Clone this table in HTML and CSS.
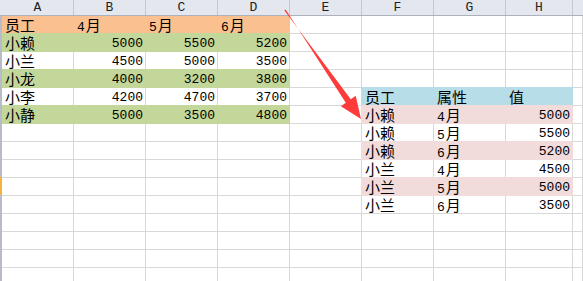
FILE: index.html
```html
<!DOCTYPE html>
<html lang="zh">
<head>
<meta charset="utf-8">
<title>Sheet</title>
<link rel="stylesheet" href="styles.css">
</head>
<body>
<div class="app">
  <div class="colhead">
    <div class="ch">A</div><div class="ch">B</div><div class="ch">C</div><div class="ch">D</div>
    <div class="ch">E</div><div class="ch">F</div><div class="ch">G</div><div class="ch h">H</div><div class="ch last"></div>
  </div>
  <div class="body">
    <div class="strip"></div>
    <div class="grid">
      <!-- row 1 -->
      <div class="c o">员工</div><div class="c o"><span class="d">4</span>月</div><div class="c o"><span class="d">5</span>月</div><div class="c o"><span class="d">6</span>月</div><div class="c"></div><div class="c"></div><div class="c"></div><div class="c"></div><div class="c"></div>
      <!-- row 2 -->
      <div class="c g">小赖</div><div class="c g n">5000</div><div class="c g n">5500</div><div class="c g n">5200</div><div class="c"></div><div class="c"></div><div class="c"></div><div class="c"></div><div class="c"></div>
      <!-- row 3 -->
      <div class="c">小兰</div><div class="c n">4500</div><div class="c n">5000</div><div class="c n">3500</div><div class="c"></div><div class="c"></div><div class="c"></div><div class="c"></div><div class="c"></div>
      <!-- row 4 -->
      <div class="c g">小龙</div><div class="c g n">4000</div><div class="c g n">3200</div><div class="c g n">3800</div><div class="c"></div><div class="c"></div><div class="c"></div><div class="c"></div><div class="c"></div>
      <!-- row 5 -->
      <div class="c">小李</div><div class="c n">4200</div><div class="c n">4700</div><div class="c n">3700</div><div class="c"></div><div class="c b">员工</div><div class="c b">属性</div><div class="c b">值</div><div class="c"></div>
      <!-- row 6 -->
      <div class="c g">小静</div><div class="c g n">5000</div><div class="c g n">3500</div><div class="c g n">4800</div><div class="c"></div><div class="c p">小赖</div><div class="c p"><span class="d">4</span>月</div><div class="c p n">5000</div><div class="c"></div>
      <!-- row 7 -->
      <div class="c"></div><div class="c"></div><div class="c"></div><div class="c"></div><div class="c"></div><div class="c">小赖</div><div class="c"><span class="d">5</span>月</div><div class="c n">5500</div><div class="c"></div>
      <!-- row 8 -->
      <div class="c"></div><div class="c"></div><div class="c"></div><div class="c"></div><div class="c"></div><div class="c p">小赖</div><div class="c p"><span class="d">6</span>月</div><div class="c p n">5200</div><div class="c"></div>
      <!-- row 9 -->
      <div class="c"></div><div class="c"></div><div class="c"></div><div class="c"></div><div class="c"></div><div class="c">小兰</div><div class="c"><span class="d">4</span>月</div><div class="c n">4500</div><div class="c"></div>
      <!-- row 10 -->
      <div class="c"></div><div class="c"></div><div class="c"></div><div class="c"></div><div class="c"></div><div class="c p">小兰</div><div class="c p"><span class="d">5</span>月</div><div class="c p n">5000</div><div class="c"></div>
      <!-- row 11 -->
      <div class="c"></div><div class="c"></div><div class="c"></div><div class="c"></div><div class="c"></div><div class="c">小兰</div><div class="c"><span class="d">6</span>月</div><div class="c n">3500</div><div class="c"></div>
      <!-- row 12 -->
      <div class="c"></div><div class="c"></div><div class="c"></div><div class="c"></div><div class="c"></div><div class="c"></div><div class="c"></div><div class="c"></div><div class="c"></div>
      <!-- row 13 -->
      <div class="c"></div><div class="c"></div><div class="c"></div><div class="c"></div><div class="c"></div><div class="c"></div><div class="c"></div><div class="c"></div><div class="c"></div>
      <!-- row 14 -->
      <div class="c"></div><div class="c"></div><div class="c"></div><div class="c"></div><div class="c"></div><div class="c"></div><div class="c"></div><div class="c"></div><div class="c"></div>
      <!-- row 15 -->
      <div class="c"></div><div class="c"></div><div class="c"></div><div class="c"></div><div class="c"></div><div class="c"></div><div class="c"></div><div class="c"></div><div class="c"></div>
    </div>
  </div>
  <svg class="arrow" width="583" height="281" viewBox="0 0 583 281" aria-hidden="true">
    <polygon points="284.4,10.4 350.8,99.3 355.7,95.8 361,119 340.9,106.2 345.8,102.7 285.6,9.6" fill="#fd3b3b"/>
  </svg>
</div>
</body>
</html>
```

FILE: styles.css
```css
html, body {
  margin: 0;
  padding: 0;
  background: #ffffff;
}

.app {
  position: relative;
  width: 583px;
  height: 281px;
  overflow: hidden;
  font-family: "Noto Sans CJK SC", "Noto Sans", sans-serif;
  color: #000;
}

.colhead {
  position: relative;
  z-index: 2;
  display: grid;
  grid-template-columns: 72px 72px 72px 72px 72px 72px 72px 67px 1fr;
  padding-left: 2px;
  height: 16px;
  box-sizing: border-box;
  background: #e4e7ee;
  border-bottom: 1px solid #abb1bd;
}

.ch {
  border-right: 1px solid #c3c7d1;
  font-family: "Liberation Mono", monospace;
  font-size: 13px;
  line-height: 15px;
  text-align: center;
  color: #222;
}

.ch.last {
  border-right: none;
}

.body {
  display: flex;
}

.strip {
  position: relative;
  z-index: 2;
  flex: 0 0 2px;
  background: linear-gradient(to bottom, #b8bcc7 0, #b8bcc7 161px, #f3b33d 161px, #f3b33d 179px, #b8bcc7 179px);
}

.grid {
  flex: 1;
  display: grid;
  grid-template-columns: 72px 72px 72px 72px 72px 72px 72px 67px 1fr;
  grid-auto-rows: 18px;
}

.c {
  box-sizing: border-box;
  border-right: 1px solid #d8d8d8;
  border-bottom: 1px solid #d8d8d8;
  padding: 0 2px 0 3px;
  font-size: 15px;
  line-height: 17px;
  white-space: nowrap;
}

.n {
  text-align: right;
  font-family: "Liberation Mono", monospace;
  font-size: 13px;
  padding-top: 1px;
}

.d {
  font-family: "Liberation Mono", monospace;
  font-size: 13px;
  margin-right: 1px;
}

.o { --f: #fac090; }
.g { --f: #c4d79b; }
.b { --f: #b7dee8; }
.p { --f: #f2dcdb; }

.o, .g, .b, .p {
  position: relative;
  background: var(--f);
  border-color: var(--f);
  box-shadow: -1px 0 0 var(--f), 0 -1px 0 var(--f), -1px -1px 0 var(--f);
}

.arrow {
  position: absolute;
  left: 0;
  top: 0;
  pointer-events: none;
  z-index: 5;
}
```
